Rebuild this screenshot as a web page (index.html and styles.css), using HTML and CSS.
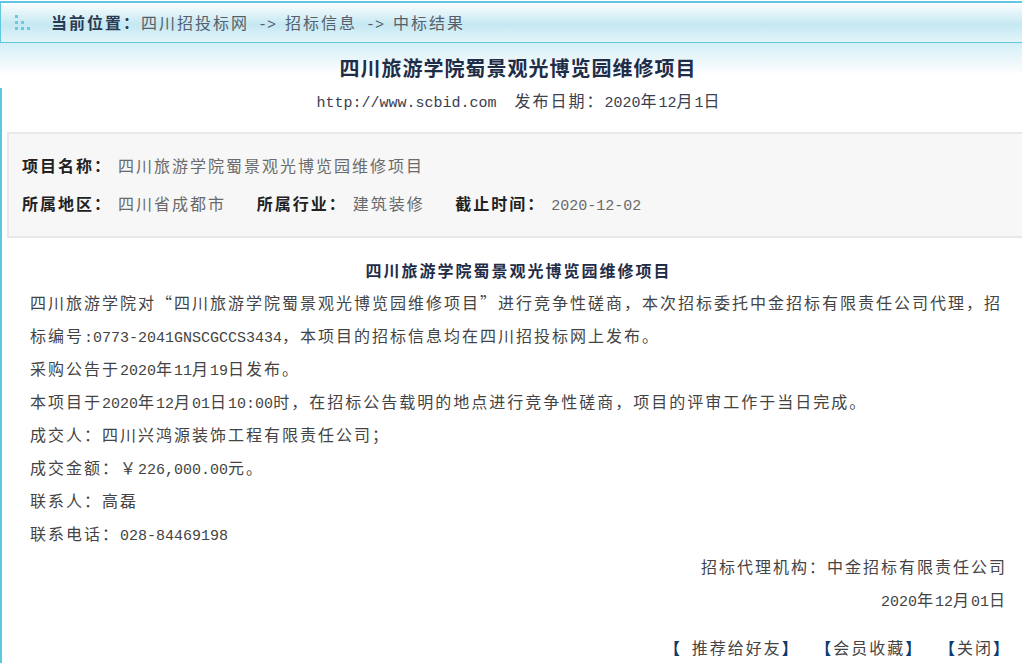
FILE: index.html
```html
<!DOCTYPE html>
<html lang="zh">
<head>
    <meta charset="UTF-8">
    <meta name="viewport" content="width=device-width, initial-scale=1.0">
    <title>中标结果 - 四川招投标网</title>
    <link rel="stylesheet" href="styles.css">
</head>
<body>
    <div class="crumb">
        <svg class="crumb-icon" width="16" height="16" viewBox="0 0 16 16">
            <rect x="0" y="0" width="3" height="3"/>
            <rect x="0" y="6" width="3" height="3"/>
            <rect x="6" y="6" width="3" height="3"/>
            <rect x="0" y="12" width="3" height="3"/>
            <rect x="6" y="12" width="3" height="3"/>
            <rect x="12" y="12" width="3" height="3"/>
        </svg>
        <span class="crumb-text"><span class="crumb-label">当前位置：</span>四川招投标网<span class="en"> -&gt; </span>招标信息<span class="en"> -&gt; </span>中标结果</span>
    </div>

    <div class="head">
        <h1>四川旅游学院蜀景观光博览园维修项目</h1>
    </div>

    <div class="main">
        <div class="meta"><span class="en">http://www.scbid.com&nbsp;&nbsp;</span>发布日期：<span class="en">2020</span>年<span class="en">12</span>月<span class="en">1</span>日</div>

        <div class="info">
            <div class="info-row">
                <span class="label">项目名称：</span><span class="value">四川旅游学院蜀景观光博览园维修项目</span>
            </div>
            <div class="info-row">
                <span class="label">所属地区：</span><span class="value">四川省成都市</span>
                <span class="label">所属行业：</span><span class="value">建筑装修</span>
                <span class="label">截止时间：</span><span class="value"><span class="en">2020-12-02</span></span>
            </div>
        </div>

        <div class="content">
            <h2>四川旅游学院蜀景观光博览园维修项目</h2>
            <p>四川旅游学院对“四川旅游学院蜀景观光博览园维修项目”进行竞争性磋商，本次招标委托中金招标有限责任公司代理，招标编号<span class="en">:0773-2041GNSCGCCS3434</span>，本项目的招标信息均在四川招投标网上发布。</p>
            <p>采购公告于<span class="en">2020</span>年<span class="en">11</span>月<span class="en">19</span>日发布。</p>
            <p>本项目于<span class="en">2020</span>年<span class="en">12</span>月<span class="en">01</span>日<span class="en">10:00</span>时，在招标公告载明的地点进行竞争性磋商，项目的评审工作于当日完成。</p>
            <p>成交人：四川兴鸿源装饰工程有限责任公司；</p>
            <p>成交金额：￥<span class="en">226,000.00</span>元。</p>
            <p>联系人：高磊</p>
            <p>联系电话：<span class="en">028-84469198</span></p>

            <p class="sign">招标代理机构：中金招标有限责任公司</p>
            <p class="sign"><span class="en">2020</span>年<span class="en">12</span>月<span class="en">01</span>日</p>

            <div class="actions">
                <a href="#"><b>【</b> 推荐给好友<b>】</b></a>
                <a href="#"><b>【</b>会员收藏<b>】</b></a>
                <a href="#"><b>【</b>关闭<b>】</b></a>
            </div>
        </div>
    </div>
</body>
</html>
```

FILE: styles.css
```css
body {
    margin: 0;
    font-family: "Noto Sans CJK SC", sans-serif;
    font-size: 16px;
    letter-spacing: 2px;
    color: #444;
    background: #fff;
    overflow: hidden;
}
.en {
    font-family: "Liberation Mono", monospace;
    font-size: 15px;
    line-height: 1;
    letter-spacing: 0;
}
.crumb {
    margin-top: 1px;
    height: 39px;
    display: flex;
    align-items: center;
    border-top: 2px solid #62c6df;
    border-bottom: 1px solid #62c6df;
    border-left: 1px solid #62c6df;
    background: linear-gradient(#fbfeff, #c5e8f2 55%, #e2f4f9);
    color: #56606c;
}
.crumb-icon {
    margin-left: 14px;
    margin-right: 20px;
    fill: #6cc8e2;
}
.crumb-text {
    white-space: pre;
    line-height: 20px;
}
.crumb-label {
    font-weight: bold;
    color: #2a3a52;
}
.head {
    padding: 10px 0 2px 14px;
    background: linear-gradient(#d4eef6, #fff 32px);
}
.head h1 {
    margin: 0;
    font-size: 20px;
    line-height: 30px;
    letter-spacing: 1px;
    text-align: center;
    color: #1f2d48;
}
.main {
    border-left: 2px solid #5bc8e0;
    min-height: calc(100vh - 85px);
}
.meta {
    margin-top: 3px;
    padding-left: 14px;
    line-height: 24px;
    text-align: center;
    color: #3a4050;
}
.info {
    margin: 20px 0 0 5px;
    padding: 12px 0 14px 13px;
    border: 2px solid #e8e8e8;
    border-right: none;
    background: #f7f7f7;
}
.info-row {
    line-height: 38px;
}
.label {
    font-weight: bold;
    color: #222;
    margin-right: 6px;
}
.value {
    color: #6a6a6a;
}
.value + .label {
    margin-left: 25px;
}
.content {
    padding: 16px 15px 0 28px;
}
.content h2 {
    margin: 0;
    font-size: 16px;
    line-height: 32px;
    text-align: center;
    color: #1f2d48;
}
.content p {
    margin: 0;
    line-height: 33px;
}
.content .sign {
    text-align: right;
}
.actions {
    margin-top: 15px;
    margin-right: -4px;
    line-height: 33px;
    text-align: right;
}
.actions a {
    color: #444;
    text-decoration: none;
    margin-left: 10px;
}
.actions a:first-child b:first-child {
    margin-right: 4px;
}
.actions b {
    color: #0e3a6c;
}
```
